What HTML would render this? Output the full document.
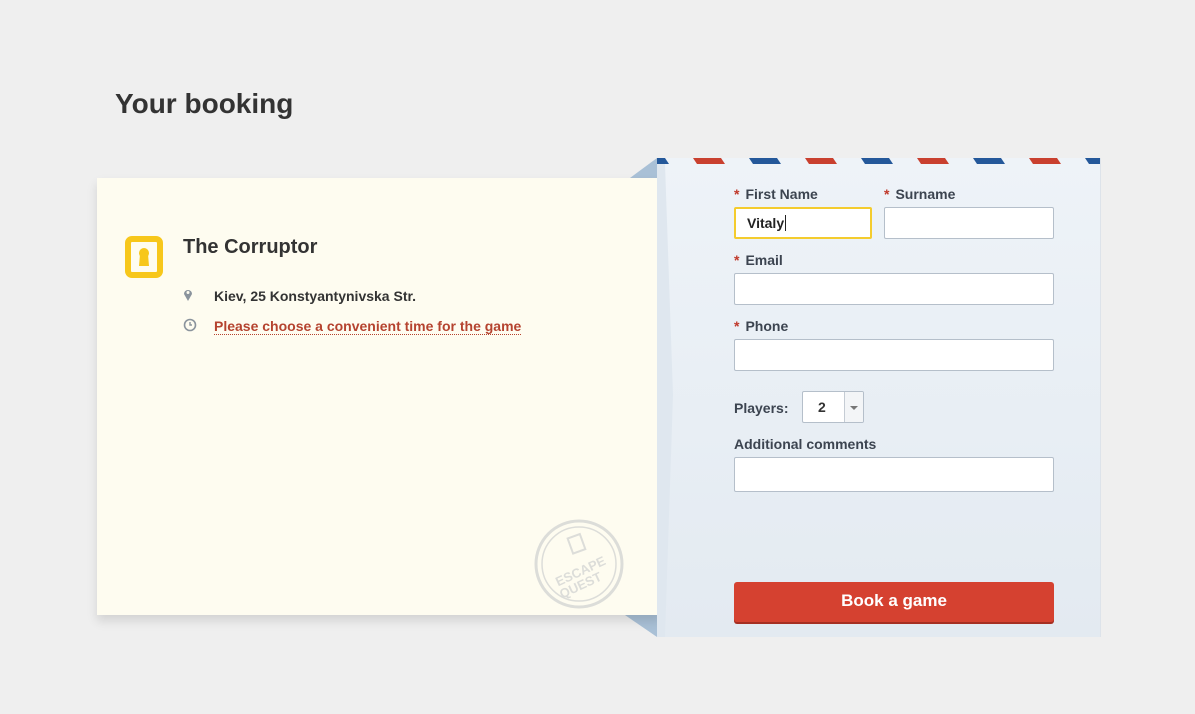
<!DOCTYPE html>
<html><head><meta charset="utf-8"><style>
body{margin:0;width:1195px;height:714px;background:#efefef;font-family:"Liberation Sans",sans-serif;position:relative;overflow:hidden}
h1{position:absolute;left:115px;top:88px;margin:0;font-size:28px;font-weight:bold;color:#333}
.card{position:absolute;left:97px;top:178px;width:565px;height:437px;background:#fefcf0;box-shadow:0 6px 10px rgba(0,0,0,.12)}
.env{position:absolute;left:657px;top:158px;width:443px;height:479px;background:linear-gradient(#eef3f8,#e3eaf1);border-right:1px solid #dde3ea}
.lbl{position:absolute;font-size:14px;font-weight:bold;color:#3c4450}
.lbl b{color:#c0392b;margin-right:6px}
.inp{position:absolute;background:#fff;border:1px solid #b5bfca;box-sizing:border-box;border-radius:2px}
</style></head><body>
<h1>Your booking</h1>
<svg style="position:absolute;left:620px;top:155px" width="60" height="490">
<polygon points="37,3 10,23 42,23" fill="#a9c0d6"/>
<polygon points="5,460 37,460 37,482" fill="#a9c0d6"/>
</svg>
<div class="card">
<svg style="position:absolute;left:28px;top:58px" width="38" height="42"><rect x="3" y="3" width="32" height="36" rx="4" fill="none" stroke="#f7c71b" stroke-width="6"/><circle cx="19" cy="17" r="5" fill="#f7c71b"/><path d="M15 18 L23 18 L24 30 L14 30Z" fill="#f7c71b"/></svg>
<div style="position:absolute;left:86px;top:58px;font-size:20px;font-weight:bold;color:#333">The Corruptor</div>
<svg style="position:absolute;left:86px;top:110px" width="10" height="13"><path d="M5 13 L1 6 A4 4 0 1 1 9 6Z" fill="#8a939c"/><circle cx="5" cy="4.5" r="1.5" fill="#fefcf0"/></svg>
<div style="position:absolute;left:117px;top:110px;font-size:14px;font-weight:bold;color:#333">Kiev, 25 Konstyantynivska Str.</div>
<svg style="position:absolute;left:86px;top:140px" width="14" height="14"><circle cx="7" cy="7" r="5.5" fill="none" stroke="#8a939c" stroke-width="1.6"/><path d="M7 4V7H9" stroke="#8a939c" stroke-width="1.4" fill="none"/></svg>
<div style="position:absolute;left:117px;top:140px;font-size:14px;font-weight:bold;color:#b5432f;border-bottom:1px dotted #b5432f;line-height:16px">Please choose a convenient time for the game</div>
<svg style="position:absolute;left:436px;top:340px" width="92" height="92" opacity=".35"><circle cx="46" cy="46" r="43" fill="none" stroke="#a0a4b0" stroke-width="3"/><circle cx="46" cy="46" r="37" fill="none" stroke="#a0a4b0" stroke-width="1.5"/><rect x="37" y="18" width="13" height="16" fill="none" stroke="#a0a4b0" stroke-width="2" transform="rotate(-20 43 26)"/><text x="46" y="58" transform="rotate(-25 46 50)" text-anchor="middle" font-size="13" font-weight="bold" fill="#a0a4b0" font-family="Liberation Sans">ESCAPE</text><text x="46" y="72" transform="rotate(-25 46 64)" text-anchor="middle" font-size="13" font-weight="bold" fill="#a0a4b0" font-family="Liberation Sans">QUEST</text></svg>
</div>
<div class="env">
<svg style="position:absolute;left:0;top:0" width="443" height="6"><g fill="#c9402f"><polygon points="36,0 64,0 68,6 40,6"/><polygon points="148,0 176,0 180,6 152,6"/><polygon points="260,0 288,0 292,6 264,6"/><polygon points="372,0 400,0 404,6 376,6"/></g><g fill="#24589a"><polygon points="0,0 8,0 12,6 0,6"/><polygon points="92,0 120,0 124,6 96,6"/><polygon points="204,0 232,0 236,6 208,6"/><polygon points="316,0 344,0 348,6 320,6"/><polygon points="428,0 443,0 443,6 432,6"/></g></svg>
<svg style="position:absolute;left:0;top:0" width="30" height="479"><polygon points="0,6 8,6 16,237 8,479 0,479" fill="#dfe7ef"/></svg>
</div>
<div class="lbl" style="left:734px;top:186px"><b>*</b>First Name</div>
<div class="lbl" style="left:884px;top:186px"><b>*</b>Surname</div>
<div class="inp" style="left:734px;top:207px;width:138px;height:32px;border:2px solid #f4cc2e;padding:6px 0 0 11px;font-size:14px;font-weight:bold;color:#222">Vitaly<span style="border-left:1px solid #222;margin-left:1px"></span></div>
<div class="inp" style="left:884px;top:207px;width:170px;height:32px"></div>
<div class="lbl" style="left:734px;top:252px"><b>*</b>Email</div>
<div class="inp" style="left:734px;top:273px;width:320px;height:32px"></div>
<div class="lbl" style="left:734px;top:318px"><b>*</b>Phone</div>
<div class="inp" style="left:734px;top:339px;width:320px;height:32px"></div>
<div class="lbl" style="left:734px;top:400px">Players:</div>
<div class="inp" style="left:802px;top:391px;width:62px;height:32px;overflow:hidden"><span style="position:absolute;left:15px;top:7px;font-size:14px;font-weight:bold;color:#333">2</span><div style="position:absolute;left:41px;top:0;width:19px;height:30px;border-left:1px solid #c5ccd4;background:#f3f5f7"><div style="position:absolute;left:5px;top:14px;border:4px solid transparent;border-top:4px solid #777;border-bottom:0"></div></div></div>
<div class="lbl" style="left:734px;top:436px">Additional comments</div>
<div class="inp" style="left:734px;top:457px;width:320px;height:35px"></div>
<div style="position:absolute;left:734px;top:582px;width:320px;height:40px;background:#d54130;border-radius:3px;box-shadow:0 2px 0 #a52f22;color:#fff;font-size:17px;font-weight:bold;text-align:center;line-height:38px">Book a game</div>
</body></html>
